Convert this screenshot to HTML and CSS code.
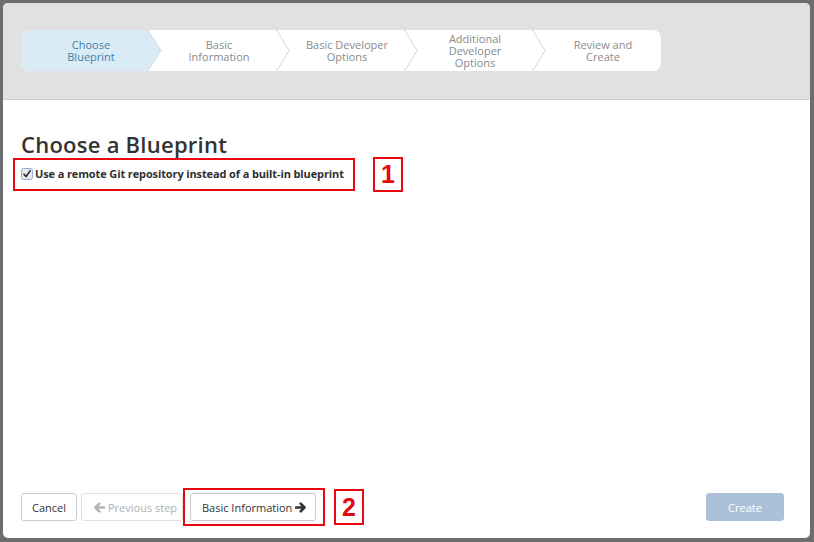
FILE: index.html
```html
<!DOCTYPE html>
<html lang="en">
<head>
<meta charset="utf-8">
<title>Choose a Blueprint</title>
<link rel="stylesheet" href="styles.css">
</head>
<body>
<div class="modal">
  <header class="modal-header">
    <ol class="steps">
      <li class="step active"><span class="step-label">Choose<br>Blueprint</span><svg class="chev" width="14" height="41" viewBox="0 0 14 41"><polygon points="0,0 13,20.5 0,41" fill="#d9ebf5"/><polyline points="0,0 13,20.5 0,41" fill="none" stroke="#d6dde2" stroke-width="1"/></svg></li>
      <li class="step"><span class="step-label">Basic<br>Information</span><svg class="chev" width="14" height="41" viewBox="0 0 14 41"><polyline points="0.5,0 13,20.5 0.5,41" fill="none" stroke="#d4d4d4" stroke-width="1"/></svg></li>
      <li class="step"><span class="step-label">Basic Developer<br>Options</span><svg class="chev" width="14" height="41" viewBox="0 0 14 41"><polyline points="0.5,0 13,20.5 0.5,41" fill="none" stroke="#d4d4d4" stroke-width="1"/></svg></li>
      <li class="step"><span class="step-label">Additional<br>Developer<br>Options</span><svg class="chev" width="14" height="41" viewBox="0 0 14 41"><polyline points="0.5,0 13,20.5 0.5,41" fill="none" stroke="#d4d4d4" stroke-width="1"/></svg></li>
      <li class="step"><span class="step-label">Review and<br>Create</span></li>
    </ol>
  </header>

  <main class="modal-body">
    <h1 class="title">Choose a Blueprint</h1>
    <div class="annot-row">
      <label class="annot annot-check">
        <span class="cb"><svg width="12" height="12" viewBox="0 0 12 12"><rect x="0.5" y="0.5" width="11" height="11" rx="2" fill="#e6e9ee" stroke="#8eaed6"/><path d="M3 6.2 L5 8.6 L9.2 2.8" fill="none" stroke="#2b2b2b" stroke-width="1.6" stroke-linecap="round" stroke-linejoin="round"/></svg></span>
        <span class="check-text">Use a remote Git repository instead of a built-in blueprint</span>
      </label>
      <span class="num num-1">1</span>
    </div>
  </main>

  <footer class="modal-footer">
    <button class="btn btn-cancel">Cancel</button>
    <button class="btn btn-disabled" disabled><svg class="ico" width="12" height="11" viewBox="0 0 12 11"><path d="M11 5.5 H2.5 M6.3 1.7 L2.5 5.5 L6.3 9.3" fill="none" stroke="#b5b5b5" stroke-width="2.6" stroke-linecap="round" stroke-linejoin="round"/></svg>Previous step</button>
    <div class="annot annot-btn">
      <button class="btn btn-next">Basic Information<svg class="ico ico-right" width="12" height="11" viewBox="0 0 12 11"><path d="M1 5.5 H9.5 M5.7 1.7 L9.5 5.5 L5.7 9.3" fill="none" stroke="#333" stroke-width="2.6" stroke-linecap="round" stroke-linejoin="round"/></svg></button>
    </div>
    <span class="num num-2">2</span>
    <button class="btn btn-create">Create</button>
  </footer>
</div>
</body>
</html>
```

FILE: styles.css
```css
* { box-sizing: border-box; }

html, body {
  margin: 0;
  padding: 0;
}

body {
  width: 814px;
  height: 542px;
  background: #6d6d6d;
  font-family: "Open Sans", "Liberation Sans", sans-serif;
  overflow: hidden;
}

.modal {
  margin: 3px 0 0 3px;
  width: 807px;
  height: 535px;
  background: #fff;
  border-radius: 5px;
  display: flex;
  flex-direction: column;
  overflow: hidden;
}

.modal-header {
  background: #e1e1e1;
  border-bottom: 1px solid #cfcfcf;
  height: 97px;
  padding: 27px 0 0 18px;
}

.steps {
  list-style: none;
  margin: 0;
  padding: 0;
  display: flex;
  width: 640px;
  height: 41px;
  background: #fff;
  border-radius: 8px;
  overflow: hidden;
}

.step {
  position: relative;
  width: 128px;
  height: 41px;
  padding-left: 12px;
  display: flex;
  align-items: center;
  justify-content: center;
  font-size: 11px;
  line-height: 12px;
  color: #8a8a8a;
  text-align: center;
}

.step-label { display: block; }

.step.active {
  background: #d9ebf5;
  color: #3f7fad;
}

.chev {
  position: absolute;
  top: 0;
  right: -13px;
  z-index: 2;
}

.modal-body {
  flex: 1;
  padding: 30px 0 0 18px;
}

.title {
  margin: 0;
  font-size: 22px;
  line-height: 28px;
  font-weight: 600;
  color: #333;
  letter-spacing: 0.25px;
}

.annot-row {
  display: flex;
  align-items: center;
  margin: -1px 0 0 -8px;
  gap: 18px;
}

.annot {
  border: 2px solid #e8080f;
}

.annot-check {
  display: flex;
  align-items: center;
  width: 342px;
  height: 33px;
  padding: 0 0 2px 6px;
}

.cb {
  display: flex;
  width: 14px;
  height: 12px;
}

.check-text {
  font-size: 11px;
  font-weight: 700;
  color: #2f2f2f;
  letter-spacing: -0.12px;
}

.num {
  display: flex;
  align-items: center;
  justify-content: center;
  width: 30px;
  height: 35px;
  border: 2px solid #e8080f;
  color: #e8080f;
  font-family: "Liberation Sans", Arial, sans-serif;
  font-weight: 700;
  font-size: 25px;
}

.modal-footer {
  display: flex;
  align-items: center;
  padding: 0 26px 12px 18px;
}

.btn {
  height: 28px;
  padding: 0 11px;
  background: #fff;
  border: 1px solid #cdcdcd;
  border-radius: 3px;
  font-family: "Open Sans", "Liberation Sans", sans-serif;
  font-size: 11px;
  color: #333;
  display: inline-flex;
  align-items: center;
  white-space: nowrap;
}

.btn + .btn { margin-left: 4px; }

.btn-cancel {
  width: 56px;
  padding: 0;
  justify-content: center;
}

.btn-disabled {
  color: #b0b0b0;
  border-color: #e0e0e0;
  width: 102px;
  padding: 0 0 0 11px;
}

.ico { margin-right: 3px; }
.ico-right { margin: 0 0 0 3px; }

.annot-btn {
  display: flex;
  align-items: center;
  height: 38px;
  width: 142px;
  padding-left: 5px;
}

.btn-next {
  width: 126px;
  padding: 0 0 0 11px;
}

.num-2 {
  margin-left: 9px;
  height: 36px;
}

.btn-create {
  margin-left: auto;
  width: 78px;
  justify-content: center;
  background: #acc1d8;
  border-color: #acc1d8;
  color: #fff;
}
```
